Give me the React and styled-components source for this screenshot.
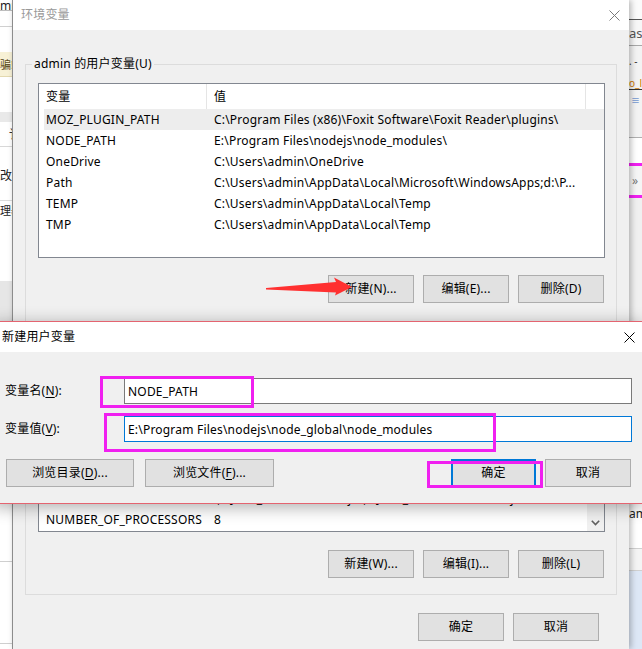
import React from "react";
import styled, { createGlobalStyle } from "styled-components";

const FONT = `"Noto Sans", "Noto Sans CJK SC", sans-serif`;

const GlobalStyle = createGlobalStyle`
  html, body { margin: 0; padding: 0; background: #f0f0f0; }
  body { font-family: ${FONT}; font-size: 12px; letter-spacing: 0.2px; color: #000; }
  *, *::before, *::after { box-sizing: border-box; }
`;

const Desktop = styled.div`
  position: relative;
  width: 642px;
  height: 649px;
  overflow: hidden;
  display: flex;
  align-items: stretch;
`;

/* ---------- background applications peeking at the edges ---------- */
const BackApp = styled.div`
  width: ${(p) => p.$w}px;
  flex: none;
  display: flex;
  flex-direction: column;
  background: ${(p) => p.$bg};
  overflow: hidden;
`;

const Band = styled.div`
  flex: none;
  height: ${(p) => p.$h}px;
  background: ${(p) => p.$bg || "transparent"};
  border-bottom: ${(p) => (p.$line ? `1px solid ${p.$line}` : "none")};
  color: ${(p) => p.$color || "#222"};
  font-size: ${(p) => p.$fs || 12}px;
  line-height: ${(p) => p.$h}px;
  padding-left: ${(p) => p.$pl || 0}px;
  letter-spacing: 0;
  white-space: nowrap;
  overflow: hidden;
`;

const FillBand = styled.div`
  flex: 1;
  background: ${(p) => p.$bg};
`;

/* ---------- main window ---------- */
const EnvWindow = styled.section`
  position: relative;
  z-index: 1;
  width: 617px;
  flex: none;
  display: flex;
  flex-direction: column;
  background: #f0f0f0;
  border-left: 1px solid #8c8c8c;
  box-shadow: 2px 0 6px rgba(0, 0, 0, 0.28);
`;

const TitleBar = styled.header`
  height: 30px;
  flex: none;
  display: flex;
  align-items: center;
  justify-content: space-between;
  background: #fff;
  padding-left: 8px;
`;

const TitleText = styled.span`
  font-size: 12px;
  line-height: 16px;
  color: ${(p) => (p.$inactive ? "#999999" : "#000")};
`;

const CloseBox = styled.div`
  width: ${(p) => p.$w}px;
  height: 100%;
  display: flex;
  align-items: center;
  justify-content: center;
`;

const WindowBody = styled.div`
  display: flex;
  flex-direction: column;
  padding: 27px 12px 0 12px;
`;

const Group = styled.fieldset`
  margin: ${(p) => p.$mt || 0}px 0 0 0;
  padding: 12px 11px ${(p) => p.$pb}px 12px;
  border: 1px solid #dcdcdc;
  min-width: 0;
`;

const GroupLabel = styled.legend`
  padding: 0 2px;
  margin-left: -6px;
  font-size: 12px;
  line-height: 14px;
`;

const VarList = styled.div`
  height: 175px;
  border: 1px solid #828790;
  background: #fff;
  display: flex;
  overflow: hidden;
`;

const ListColumns = styled.div`
  flex: 1;
  min-width: 0;
  display: flex;
  flex-direction: column;
  padding-left: 5px;
`;

const ColumnHeader = styled.div`
  height: 25px;
  flex: none;
  display: grid;
  grid-template-columns: 163px 379px;
`;

const HeaderCell = styled.div`
  display: flex;
  align-items: center;
  padding-left: ${(p) => p.$pad}px;
  border-right: 1px solid #e5e5e5;
  line-height: 16px;
`;

const VarRow = styled.div`
  height: 21px;
  flex: none;
  display: grid;
  grid-template-columns: 163px 379px;
  align-items: center;
  background: ${(p) => (p.$selected ? "#ededed" : "transparent")};
`;

const Cell = styled.span`
  padding-left: ${(p) => p.$pad}px;
  white-space: nowrap;
  overflow: hidden;
  line-height: 21px;
`;

const ScrollTrack = styled.div`
  width: 17px;
  flex: none;
  background: #f0f0f0;
  display: flex;
  flex-direction: column;
  justify-content: flex-end;
`;

const ScrollArrow = styled.div`
  height: 17px;
  display: flex;
  align-items: center;
  justify-content: center;
`;

const ButtonRow = styled.div`
  display: flex;
  justify-content: flex-end;
  gap: ${(p) => p.$gap || 9}px;
  margin-top: ${(p) => p.$mt || 0}px;
  padding-right: ${(p) => p.$pr || 0}px;
`;

const Button = styled.button`
  width: ${(p) => p.$w || 86}px;
  height: 28px;
  flex: none;
  padding: 0;
  font: inherit;
  font-size: 12px;
  line-height: 16px;
  letter-spacing: 0.2px;
  color: #000;
  background: #e1e1e1;
  border: ${(p) => (p.$default ? "2px solid #0078d7" : "1px solid #adadad")};
  display: flex;
  align-items: center;
  justify-content: center;
`;

const Key = styled.span`
  text-decoration: underline;
  text-underline-offset: 2px;
`;

/* ---------- new variable dialog ---------- */
const NewVarDialog = styled.section`
  position: absolute;
  left: -7px;
  top: 321px;
  width: 650px;
  z-index: 2;
  display: flex;
  flex-direction: column;
  background: #f0f0f0;
  border: 1px solid #e46470;
  box-shadow: 0 3px 16px rgba(0, 0, 0, 0.33);
`;

const DialogBody = styled.div`
  display: flex;
  flex-direction: column;
  padding: 26px 10px 16px 11px;
`;

const FieldGrid = styled.div`
  display: grid;
  grid-template-columns: 119px 1fr;
  row-gap: 12px;
  align-items: center;
`;

const FieldLabel = styled.label`
  line-height: 16px;
`;

const TextField = styled.input`
  width: 100%;
  height: 26px;
  padding: 0 3px;
  font: inherit;
  font-size: 12px;
  letter-spacing: 0.2px;
  color: #000;
  background: #fff;
  border: 1px solid ${(p) => (p.$focused ? "#0078d7" : "#7a7a7a")};
  outline: none;
`;

const DialogButtons = styled.div`
  display: flex;
  justify-content: space-between;
  margin-top: 17px;
  padding: 0 1px 0 1px;
`;

const ButtonGroup = styled.div`
  display: flex;
  gap: ${(p) => p.$gap}px;
`;

/* ---------- annotations drawn over the screenshot ---------- */
const Callout = styled.div`
  position: absolute;
  z-index: 3;
  left: ${(p) => p.$x}px;
  top: ${(p) => p.$y}px;
  width: ${(p) => p.$w}px;
  height: ${(p) => p.$h}px;
  border: 3px solid #f020f0;
`;

const PointerArrow = styled.svg`
  position: absolute;
  z-index: 3;
  left: 262px;
  top: 274px;
`;

const CloseIcon = ({ color }) => (
  <svg width="11" height="11" viewBox="0 0 11 11">
    <path d="M0.5 0.5 L10.5 10.5 M10.5 0.5 L0.5 10.5" stroke={color} strokeWidth="1" fill="none" />
  </svg>
);

const userVars = [
  ["MOZ_PLUGIN_PATH", "C:\\Program Files (x86)\\Foxit Software\\Foxit Reader\\plugins\\"],
  ["NODE_PATH", "E:\\Program Files\\nodejs\\node_modules\\"],
  ["OneDrive", "C:\\Users\\admin\\OneDrive"],
  ["Path", "C:\\Users\\admin\\AppData\\Local\\Microsoft\\WindowsApps;d:\\P..."],
  ["TEMP", "C:\\Users\\admin\\AppData\\Local\\Temp"],
  ["TMP", "C:\\Users\\admin\\AppData\\Local\\Temp"],
];

const sysVars = [
  ["ComSpec", "C:\\WINDOWS\\system32\\cmd.exe"],
  ["DriverData", "C:\\Windows\\System32\\Drivers\\DriverData"],
  ["JAVA_HOME", "C:\\Program Files\\Java\\jdk1.8.0_151"],
  ["MAVEN_HOME", "D:\\apache-maven-3.5.2"],
  ["NODE_HOME", "E:\\Program Files\\nodejs"],
  ["CLASSPATH", ".;%JAVA_HOME%\\lib\\dt.jar;%JAVA_HOME%\\lib\\tools.jar"],
  ["NUMBER_OF_PROCESSORS", "8"],
];

export default function App() {
  return (
    <>
      <GlobalStyle />
      <Desktop>
        <BackApp $w={12} $bg="#ffffff">
          <Band $h={11} $line="#bdbdbd" $fs={12}>mp</Band>
          <Band $h={16} $line="#d0d0d0" />
          <Band $h={25} />
          <Band $h={25} $bg="#f7f1d6" $line="#e3d9b0" $fs={11} $color="#5a4a20">骗!</Band>
          <Band $h={35} />
          <Band $h={10} $bg="#e9e9e9" />
          <Band $h={25} $line="#d8d8d8" $pl={9} $color="#333">讠</Band>
          <Band $h={20} />
          <Band $h={18} $color="#222">改</Band>
          <Band $h={16} $line="#dcdcdc" />
          <Band $h={20} $fs={11} $color="#222">理器</Band>
          <Band $h={60} />
          <Band $h={55} $bg="#e6e6e6" />
          <Band $h={180} $bg="#ffffff" />
          <Band $h={46} $line="#cfcfcf" />
          <Band $h={82} $line="#cfcfcf" />
          <FillBand $bg="#ffffff" />
        </BackApp>

        <EnvWindow>
          <TitleBar>
            <TitleText $inactive>环境变量</TitleText>
            <CloseBox $w={30}>
              <CloseIcon color="#7a7a7a" />
            </CloseBox>
          </TitleBar>
          <WindowBody>
            <Group $pb={24}>
              <GroupLabel>admin 的用户变量(U)</GroupLabel>
              <VarList>
                <ListColumns>
                  <ColumnHeader>
                    <HeaderCell $pad={2}>变量</HeaderCell>
                    <HeaderCell $pad={7}>值</HeaderCell>
                  </ColumnHeader>
                  {userVars.map(([name, value], i) => (
                    <VarRow key={name} $selected={i === 0}>
                      <Cell $pad={2}>{name}</Cell>
                      <Cell $pad={7}>{value}</Cell>
                    </VarRow>
                  ))}
                </ListColumns>
              </VarList>
              <ButtonRow $mt={17} $pr={1}>
                <Button>新建(N)...</Button>
                <Button>编辑(E)...</Button>
                <Button>删除(D)</Button>
              </ButtonRow>
            </Group>

            <Group $mt={3} $pb={16}>
              <GroupLabel>系统变量(S)</GroupLabel>
              <VarList>
                <ListColumns>
                  <ColumnHeader>
                    <HeaderCell $pad={2}>变量</HeaderCell>
                    <HeaderCell $pad={7}>值</HeaderCell>
                  </ColumnHeader>
                  {sysVars.map(([name, value]) => (
                    <VarRow key={name}>
                      <Cell $pad={2}>{name}</Cell>
                      <Cell $pad={7}>{value}</Cell>
                    </VarRow>
                  ))}
                </ListColumns>
                <ScrollTrack>
                  <ScrollArrow>
                    <svg width="9" height="6" viewBox="0 0 9 6">
                      <path d="M0.8 0.8 L4.5 4.6 L8.2 0.8" stroke="#606060" strokeWidth="1.6" fill="none" />
                    </svg>
                  </ScrollArrow>
                </ScrollTrack>
              </VarList>
              <ButtonRow $mt={18} $pr={1}>
                <Button>新建(W)...</Button>
                <Button>编辑(I)...</Button>
                <Button>删除(L)</Button>
              </ButtonRow>
            </Group>

            <ButtonRow $mt={18} $pr={18}>
              <Button>确定</Button>
              <Button>取消</Button>
            </ButtonRow>
          </WindowBody>
        </EnvWindow>

        <BackApp $w={13} $bg="#f0f0f0">
          <Band $h={20} $bg="#fbfbfb" $line="#555555" />
          <Band $h={26} $bg="#f7f7f7" $line="#a8a8a8" $color="#555" $fs={13}>as</Band>
          <Band $h={30} $bg="#f3f3f3" $color="#333" $fs={10}>. -</Band>
          <Band $h={14} $bg="#f3f3f3" $line="#333" $color="#d07a00" $fs={10}>o_l</Band>
          <Band $h={22} $bg="#f3f3f3" $color="#3a6fc4" $fs={9} $pl={2}>≡</Band>
          <Band $h={26} $bg="#f3f3f3" $line="#b0b0b0" />
          <Band $h={25} $bg="#ffffff" />
          <Band $h={3} $bg="#f020f0" />
          <Band $h={29} $bg="#f5f5f5" $color="#777" $pl={3}>»</Band>
          <Band $h={3} $bg="#f020f0" />
          <Band $h={274} $bg="#f0f0f0" />
          <Band $h={27} $bg="#ffffff" $line="#d0d0d0" $color="#222">目录</Band>
          <Band $h={30} $bg="#ffffff" $color="#222">am</Band>
          <Band $h={20} $bg="#ffffff" $line="#d0d0d0" />
          <Band $h={22} $bg="#f4f4f4" $line="#d0d0d0" />
          <FillBand $bg="#dde7f6" />
        </BackApp>

        <NewVarDialog>
          <TitleBar>
            <TitleText>新建用户变量</TitleText>
            <CloseBox $w={26}>
              <CloseIcon color="#000" />
            </CloseBox>
          </TitleBar>
          <DialogBody>
            <FieldGrid>
              <FieldLabel>
                变量名(<Key>N</Key>):
              </FieldLabel>
              <TextField readOnly value="NODE_PATH" />
              <FieldLabel>
                变量值(<Key>V</Key>):
              </FieldLabel>
              <TextField $focused readOnly value={"E:\\Program Files\\nodejs\\node_global\\node_modules"} />
            </FieldGrid>
            <DialogButtons>
              <ButtonGroup $gap={11}>
                <Button $w={128}>
                  浏览目录(<Key>D</Key>)...
                </Button>
                <Button $w={129}>
                  浏览文件(<Key>F</Key>)...
                </Button>
              </ButtonGroup>
              <ButtonGroup $gap={9}>
                <Button $w={85} $default>确定</Button>
                <Button $w={86}>取消</Button>
              </ButtonGroup>
            </DialogButtons>
          </DialogBody>
        </NewVarDialog>

        <Callout $x={100} $y={376} $w={154} $h={32} />
        <Callout $x={104} $y={413} $w={392} $h={39} />
        <Callout $x={427} $y={461} $w={116} $h={27} />

        <PointerArrow width="96" height="26" viewBox="0 0 96 26">
          <polygon
            points="4,14 74,8 72,3.5 90,13 73,21.5 74,18.5 4,15.5"
            fill="#ff3030"
          />
        </PointerArrow>
      </Desktop>
    </>
  );
}
